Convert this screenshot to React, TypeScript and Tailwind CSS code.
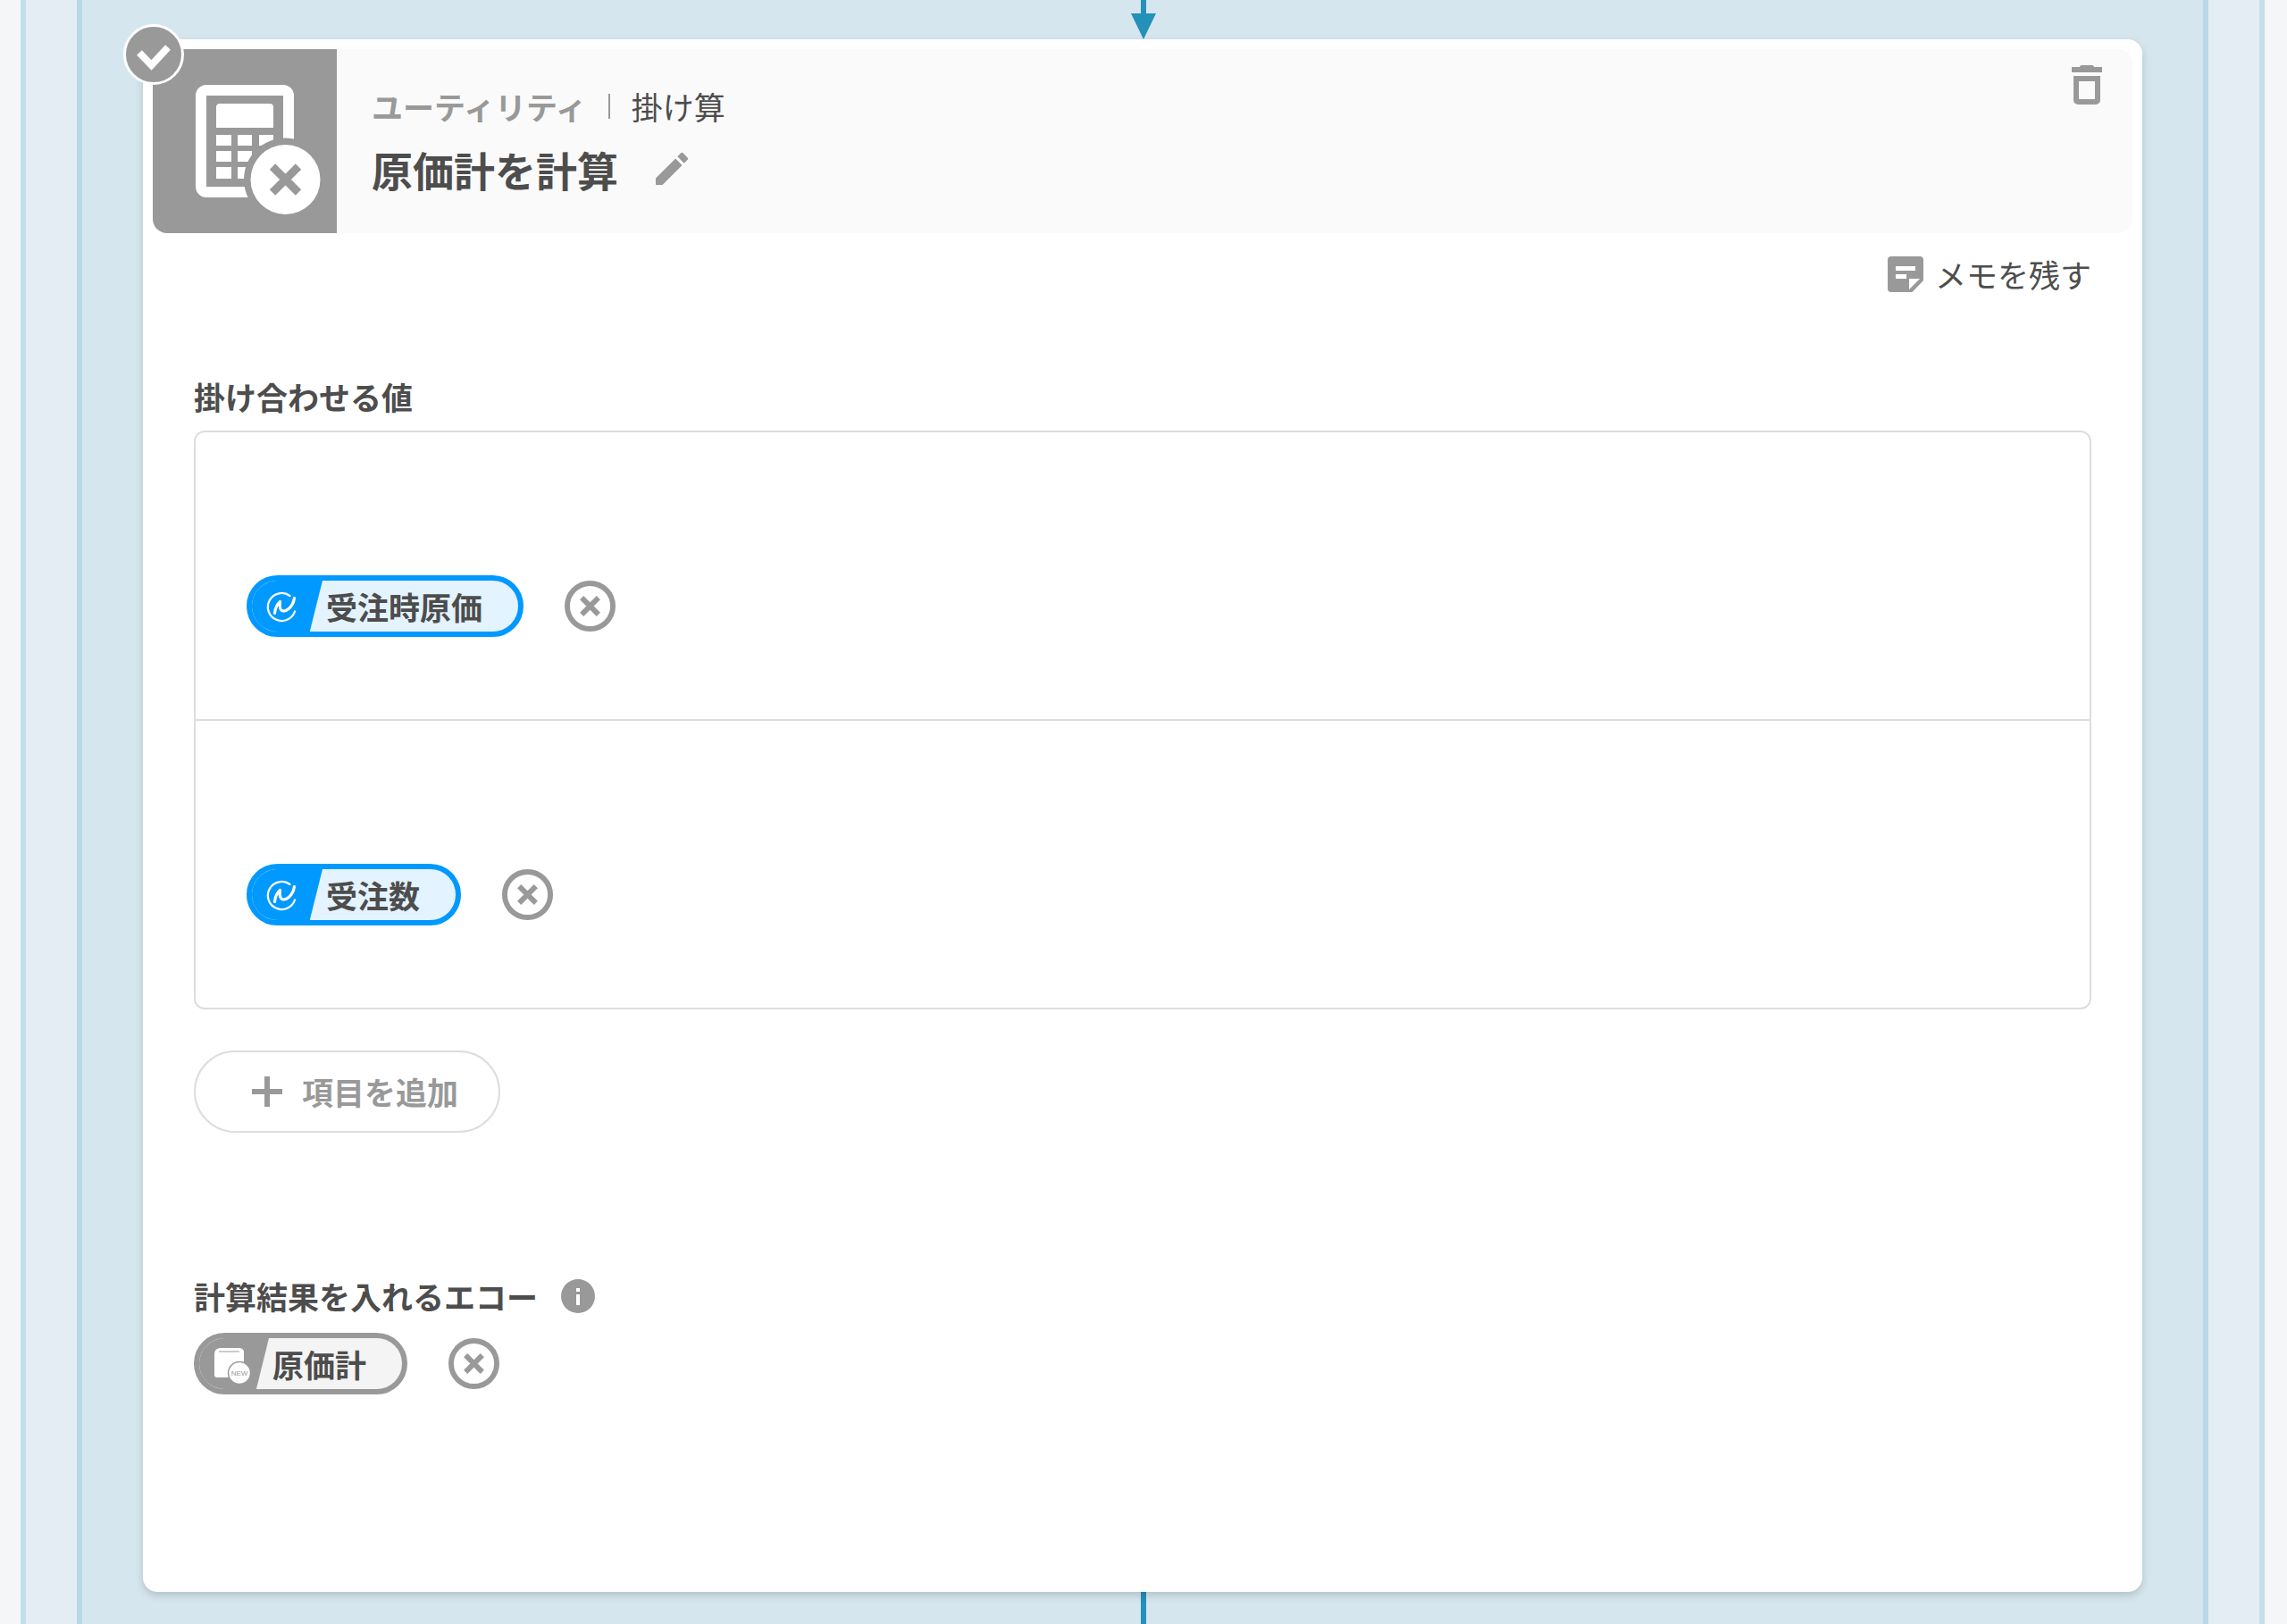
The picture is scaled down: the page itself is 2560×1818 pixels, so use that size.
import { useState } from 'react';
import { MdEdit } from 'react-icons/md';

type Echo = { id: string; label: string };

function CalculatorIcon() {
  return (
    <svg viewBox="0 0 206 206" className="block h-full w-full" aria-hidden="true">
      <rect x="54" y="46" width="98" height="114" rx="6" fill="none" stroke="#fff" strokeWidth="12" />
      <path fill="#999" d="M60 52h86v102H60z" />
      <path fill="#fff" d="M75 61h56a4 4 0 0 1 4 4v23H71V65a4 4 0 0 1 4-4z" />
      <path
        fill="#fff"
        d="M71 96h17v12H71zM95 96h16v12H95zM119 96h16v12h-16zM71 114h17v12H71zM95 114h16v12H95zM119 114h16v12h-16zM71 132h17v13H71zM95 132h16v13H95zM119 132h16v13h-16z"
      />
      <circle cx="148.5" cy="146" r="46.5" fill="#999" />
      <circle cx="148.5" cy="146" r="39" fill="#fff" />
      <path d="M134 131.500l29 29M163 131.500l-29 29" stroke="#999" strokeWidth="9" fill="none" />
    </svg>
  );
}

function TrashIcon() {
  return (
    <svg viewBox="0 0 36 46" className="block h-[46px] w-9" fill="#999" aria-hidden="true">
      <path d="M10 3V2.500L11.500 1h13L26 2.500V3h9v6H1V3z" />
      <path fillRule="evenodd" d="M3 13h30v27a5 5 0 0 1-5 5H8a5 5 0 0 1-5-5zm6 6v20h18V19z" />
    </svg>
  );
}

function NoteIcon() {
  return (
    <svg viewBox="0 0 42 42" className="block size-[42px]" aria-hidden="true">
      <path fill="#999" d="M5 1h32a4 4 0 0 1 4 4v23L28.500 41H5a4 4 0 0 1-4-4V5a4 4 0 0 1 4-4z" />
      <path fill="#fff" d="M10 12h22v5H10zM10 21h12v5H10zM25 26h12L25 38z" />
    </svg>
  );
}

function FlowIcon() {
  return (
    <svg viewBox="0 0 36 36" className="block size-9" fill="none" stroke="#fff" strokeLinecap="round" strokeLinejoin="round" aria-hidden="true">
      <path strokeWidth="2.2" d="M26.500 6A15.500 15.500 0 1 0 32 23.500" />
      <path strokeWidth="3.2" d="M9.500 25.500C10 20 11.500 16 15.500 12.500c-.5 4-.5 8.500 2 10C21.500 24.500 30 19 31.500 8.500" />
    </svg>
  );
}

function NewEchoIcon() {
  return (
    <svg viewBox="0 0 42 44" className="block h-11 w-[42px]" aria-hidden="true">
      <path fill="#fff" d="M7 4h22a5 5 0 0 1 5 6v24a3 3 0 0 1-3 3H4a3 3 0 0 1-3-3V10a7 7 0 0 1 6-6z" />
      <path stroke="#ccc" strokeWidth="2" d="M6 8h23" />
      <circle cx="29" cy="32" r="12.500" fill="#fff" stroke="#999" strokeWidth="1.500" />
      <text x="29" y="35" textAnchor="middle" fontSize="8" fill="#999" fontFamily="Liberation Sans, sans-serif">NEW</text>
    </svg>
  );
}

function RemoveButton({ label, onClick }: { label: string; onClick?: () => void }) {
  return (
    <button type="button" aria-label={label} onClick={onClick} className="size-[57px] shrink-0">
      <svg viewBox="0 0 58 58" className="block size-full" fill="none" stroke="#999" aria-hidden="true">
        <circle cx="29" cy="29" r="26" strokeWidth="6" />
        <path strokeWidth="6" d="M19.500 19.500l19 19M38.500 19.500l-19 19" />
      </svg>
    </button>
  );
}

function EchoChip({ label, isNew = false }: { label: string; isNew?: boolean }) {
  return (
    <div className={`flex h-[69px] overflow-hidden rounded-full border-[6px] ${isNew ? 'border-[#999] bg-[#f4f4f4]' : 'border-[#0099ff] bg-[#e3f3ff]'}`}>
      <div
        className={`flex shrink-0 items-center pl-4 [clip-path:polygon(0_0,100%_0,82%_100%,0_100%)] ${isNew ? 'w-[78px] bg-[#999]' : 'w-[79px] bg-[#0099ff]'}`}
      >
        {isNew ? <NewEchoIcon /> : <FlowIcon />}
      </div>
      <span className="pl-1 pr-10 text-[35px] leading-[57px] font-bold whitespace-nowrap">{label}</span>
    </div>
  );
}

export default function App() {
  const [values, setValues] = useState<Echo[]>([
    { id: 'cost', label: '受注時原価' },
    { id: 'count', label: '受注数' },
  ]);

  const removeValue = (id: string) => setValues(values.filter((v) => v.id !== id));
  const addValue = () => setValues([...values, { id: String(Date.now()), label: '受注数' }]);

  return (
    <div className="min-h-screen bg-[#f4f6f8] pr-[25px] pl-[23px] font-['Noto_Sans_CJK_JP',sans-serif] text-[#4d4d4d]">
      <div className="border-x-[6px] border-[#c3dfe9] bg-[#e4edf4] px-[57px]">
        <div className="flex min-h-screen flex-col border-x-[6px] border-[#b8dae6] bg-[#d5e6ee] px-[68px]">
          {/* Incoming connector */}
          <div className="flex h-11 justify-center overflow-hidden pl-0.5">
            <svg viewBox="0 0 28 44" className="block h-11 w-7" fill="#2391b9" aria-hidden="true">
              <path d="M11 0h6v15h11L14 44 0 15h11z" />
            </svg>
          </div>

          {/* Step card */}
          <section className="relative rounded-2xl bg-white p-[11px] pb-[221px] shadow-[0_4px_10px_rgba(0,0,0,0.16)]">
            <div className="absolute -top-[17px] -left-[22px] z-10 flex size-[68px] items-center justify-center rounded-full border-[3px] border-white bg-[#999]">
              <svg viewBox="0 0 40 40" className="size-10" fill="none" stroke="#fff" strokeWidth="8" aria-hidden="true">
                <path d="M4 18l13.500 14L36 12" />
              </svg>
            </div>

            {/* Header */}
            <header className="flex h-[206px] overflow-hidden rounded-2xl bg-[#fafafa]">
              <div className="size-[206px] shrink-0 bg-[#999]">
                <CalculatorIcon />
              </div>
              <div className="flex flex-1 flex-col pt-[38px] pl-[39px]">
                <div className="flex h-[52px] items-center text-[35px] leading-[52px]">
                  <span className="font-bold text-[#999]">ユーティリティ</span>
                  <span className="ml-6 h-7 w-0.5 bg-[#999]" />
                  <span className="ml-6">掛け算</span>
                </div>
                <div className="mt-3 flex h-16 items-center gap-9">
                  <h2 className="text-[46px] leading-[64px] font-bold">原価計を計算</h2>
                  <button type="button" aria-label="名前を編集">
                    <MdEdit className="size-12 text-[#999]" />
                  </button>
                </div>
              </div>
              <button type="button" aria-label="削除" className="mt-[17px] mr-[33px] self-start">
                <TrashIcon />
              </button>
            </header>

            <div className="px-[46px]">
              <div className="mt-[22px] flex h-12 justify-end">
                <button type="button" className="flex items-center gap-3 text-[35px] leading-[48px]">
                  <NoteIcon />
                  メモを残す
                </button>
              </div>

              {/* Values to multiply */}
              <h3 className="mt-[87px] text-[35px] leading-[52px] font-bold">掛け合わせる値</h3>
              <ul className="mt-3 divide-y-2 divide-[#ddd] rounded-xl border-2 border-[#ddd]">
                {values.map((v) => (
                  <li key={v.id} className="flex items-center gap-[46px] px-[57px] pt-40 pb-[92px]">
                    <EchoChip label={v.label} />
                    <RemoveButton label={`${v.label}を削除`} onClick={() => removeValue(v.id)} />
                  </li>
                ))}
              </ul>
              <button
                type="button"
                onClick={addValue}
                className="mt-[46px] flex h-[92px] items-center gap-[22px] rounded-full border-2 border-[#ddd] pr-[45px] pl-[63px] text-[35px] leading-[52px] font-bold text-[#999]"
              >
                <svg viewBox="0 0 34 34" className="size-[34px]" stroke="#999" strokeWidth="6" aria-hidden="true">
                  <path d="M17 0v34M0 17h34" />
                </svg>
                項目を追加
              </button>

              {/* Result */}
              <div className="mt-[157px] flex items-center gap-[26px]">
                <h3 className="text-[35px] leading-[52px] font-bold">計算結果を入れるエコー</h3>
                <button type="button" aria-label="ヘルプ">
                  <svg viewBox="0 0 38 38" className="block size-[38px]" aria-hidden="true">
                    <circle cx="19" cy="19" r="19" fill="#999" />
                    <path fill="#fff" d="M17 10h4v4h-4zM17 17h4v12h-4z" />
                  </svg>
                </button>
              </div>
              <div className="mt-[15px] flex items-center gap-[46px]">
                <EchoChip label="原価計" isNew />
                <RemoveButton label="原価計を削除" />
              </div>
            </div>
          </section>

          {/* Outgoing connector */}
          <div className="flex min-h-9 flex-1 justify-center pl-0.5">
            <div className="w-1.5 bg-[#2391b9]" />
          </div>
        </div>
      </div>
    </div>
  );
}
